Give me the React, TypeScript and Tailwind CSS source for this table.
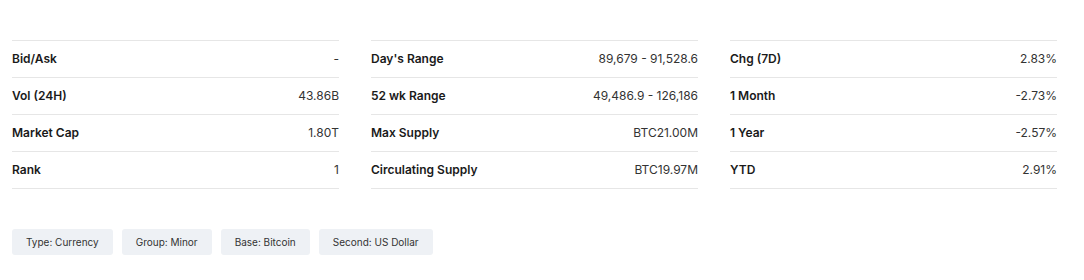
import React from "react";

const cols: [string, string][][] = [
  [
    ["Bid/Ask", "-"],
    ["Vol (24H)", "43.86B"],
    ["Market Cap", "1.80T"],
    ["Rank", "1"],
  ],
  [
    ["Day's Range", "89,679 - 91,528.6"],
    ["52 wk Range", "49,486.9 - 126,186"],
    ["Max Supply", "BTC21.00M"],
    ["Circulating Supply", "BTC19.97M"],
  ],
  [
    ["Chg (7D)", "2.83%"],
    ["1 Month", "-2.73%"],
    ["1 Year", "-2.57%"],
    ["YTD", "2.91%"],
  ],
];

const tags = ["Type: Currency", "Group: Minor", "Base: Bitcoin", "Second: US Dollar"];

export default function App() {
  return (
    <div
      className="w-[1084px] h-[280px] bg-white pl-3 pt-10"
      style={{ fontFamily: "Inter, 'Liberation Sans', sans-serif" }}
    >
      <div className="grid grid-cols-[327px_327px_327px] gap-x-8">
        {cols.map((col, i) => (
          <div key={i} className="border-t border-[#e6e6e6]">
            {col.map(([k, v]) => (
              <div
                key={k}
                className="flex h-[37px] items-center justify-between border-b border-[#e6e6e6] text-[12px]"
              >
                <span className="font-semibold text-[#1a1a1a]">{k}</span>
                <span className="text-[#333333]">{v}</span>
              </div>
            ))}
          </div>
        ))}
      </div>
      <div className="mt-[40px] flex gap-[9px]">
        {tags.map((t) => (
          <div
            key={t}
            className="flex h-[26px] items-center rounded-[3px] bg-[#eef1f5] px-[14px] text-[10px] text-[#333333]"
          >
            {t}
          </div>
        ))}
      </div>
    </div>
  );
}
